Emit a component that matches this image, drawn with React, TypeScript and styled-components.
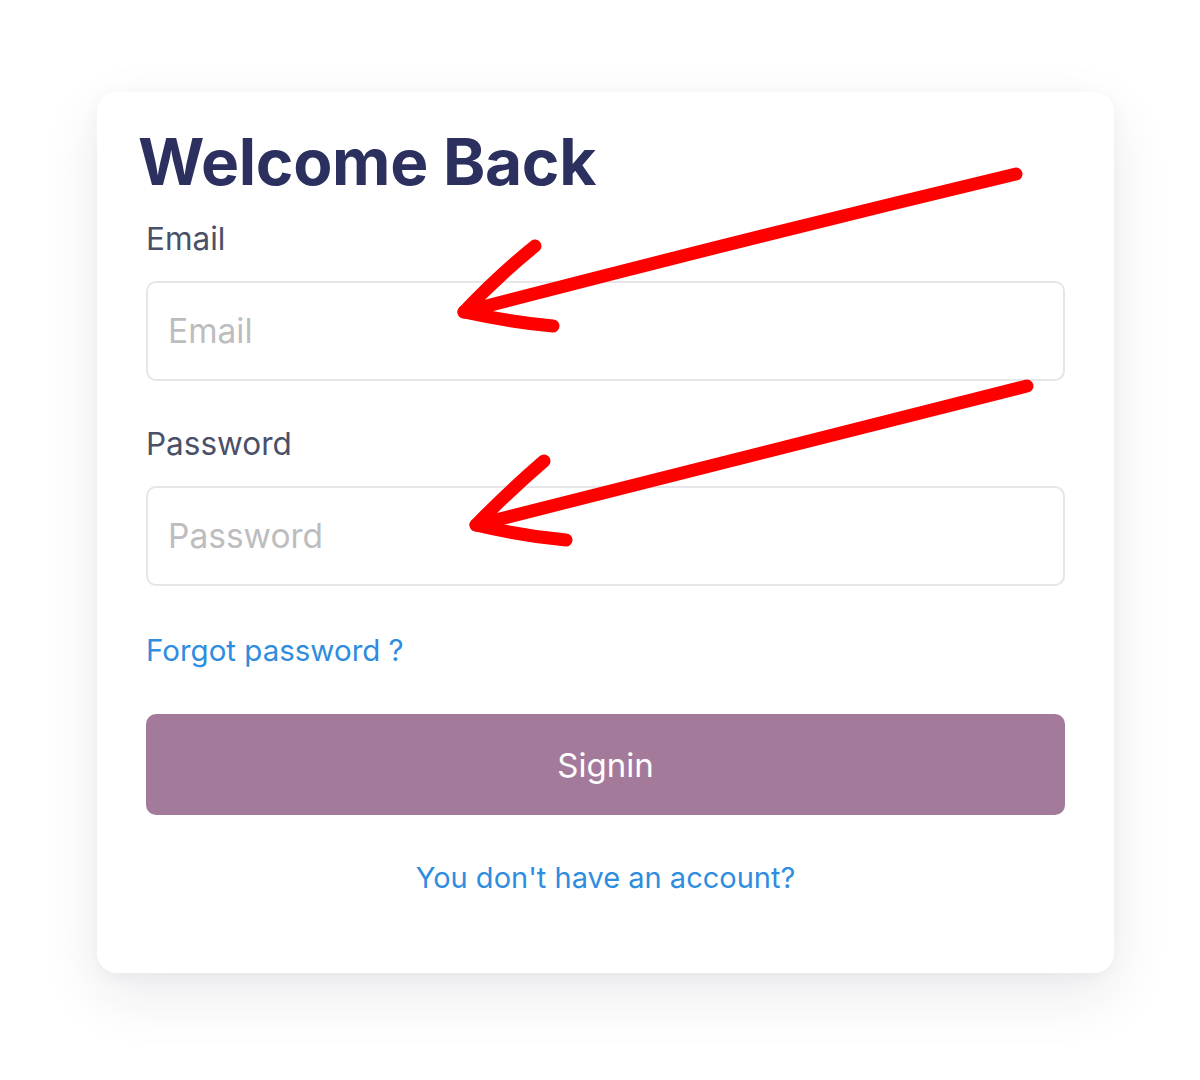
import React from "react";
import styled, { createGlobalStyle } from "styled-components";

const GlobalStyle = createGlobalStyle`
  html, body { margin: 0; padding: 0; background: #ffffff; }
  body { font-family: Inter, "Noto Sans", sans-serif; }
  * { box-sizing: border-box; }
`;

const Page = styled.div`
  position: relative;
  width: 1200px;
  height: 1080px;
  padding: 92px 0 0 97px;
  background: #ffffff;
`;

const Card = styled.div`
  width: 1017px;
  height: 881px;
  background: #ffffff;
  border-radius: 20px;
  box-shadow: 0 22px 60px rgba(30, 35, 70, 0.09), 0 4px 18px rgba(30, 35, 70, 0.04);
  padding: 30px 49px 0 49px;
  display: flex;
  flex-direction: column;
`;

const Title = styled.h1`
  margin: 0 0 0 -8px;
  font-size: 64px;
  font-weight: 700;
  letter-spacing: -0.3px;
  color: #2c305f;
  line-height: 80px;
`;

const Field = styled.div<{ $top: number }>`
  display: flex;
  flex-direction: column;
  margin-top: ${(p) => p.$top}px;
`;

const Label = styled.label`
  font-size: 31.5px;
  color: #4a5068;
  line-height: 36px;
  margin-bottom: 24px;
`;

const Input = styled.input`
  width: 100%;
  height: 100px;
  border: 2px solid #e6e6e9;
  border-radius: 10px;
  padding: 0 20px;
  font-family: Inter, "Noto Sans", sans-serif;
  font-size: 33.5px;
  color: #333;
  outline: none;
  background: #fff;
  &::placeholder { color: #bdbdc0; }
`;

const LinkText = styled.a<{ $size: number }>`
  font-size: ${(p) => p.$size}px;
  color: #2f8de0;
  text-decoration: none;
  line-height: 36px;
  cursor: pointer;
`;

const ForgotRow = styled.div`
  margin-top: 46px;
`;

const Button = styled.button`
  margin-top: 46px;
  width: 100%;
  height: 101px;
  border: none;
  border-radius: 10px;
  background: #a47a9b;
  color: #ffffff;
  font-family: Inter, "Noto Sans", sans-serif;
  font-size: 33px;
  cursor: pointer;
`;

const Footer = styled.div`
  margin-top: 45px;
  text-align: center;
`;

const Overlay = styled.svg`
  position: absolute;
  left: 0;
  top: 0;
  pointer-events: none;
`;

export default function App() {
  return (
    <>
      <GlobalStyle />
      <Page>
        <Card>
          <Title>Welcome Back</Title>
          <Field $top={19}>
            <Label>Email</Label>
            <Input placeholder="Email" />
          </Field>
          <Field $top={45}>
            <Label>Password</Label>
            <Input type="password" placeholder="Password" />
          </Field>
          <ForgotRow>
            <LinkText $size={29.5}>Forgot password ?</LinkText>
          </ForgotRow>
          <Button>Signin</Button>
          <Footer>
            <LinkText $size={29}>You don't have an account?</LinkText>
          </Footer>
        </Card>
        <Overlay width="1200" height="1080" viewBox="0 0 1200 1080">
          <g fill="none" stroke="#ff0000" strokeWidth="13" strokeLinecap="round" strokeLinejoin="round">
            <path d="M1016 174 Q740 240 464 312" />
            <path d="M535 246 Q498 276 464 312 Q510 322 553 326" />
            <path d="M1027 386 Q750 455 476 525" />
            <path d="M544 461 Q508 492 476 525 Q522 536 566 540" />
          </g>
        </Overlay>
      </Page>
    </>
  );
}
